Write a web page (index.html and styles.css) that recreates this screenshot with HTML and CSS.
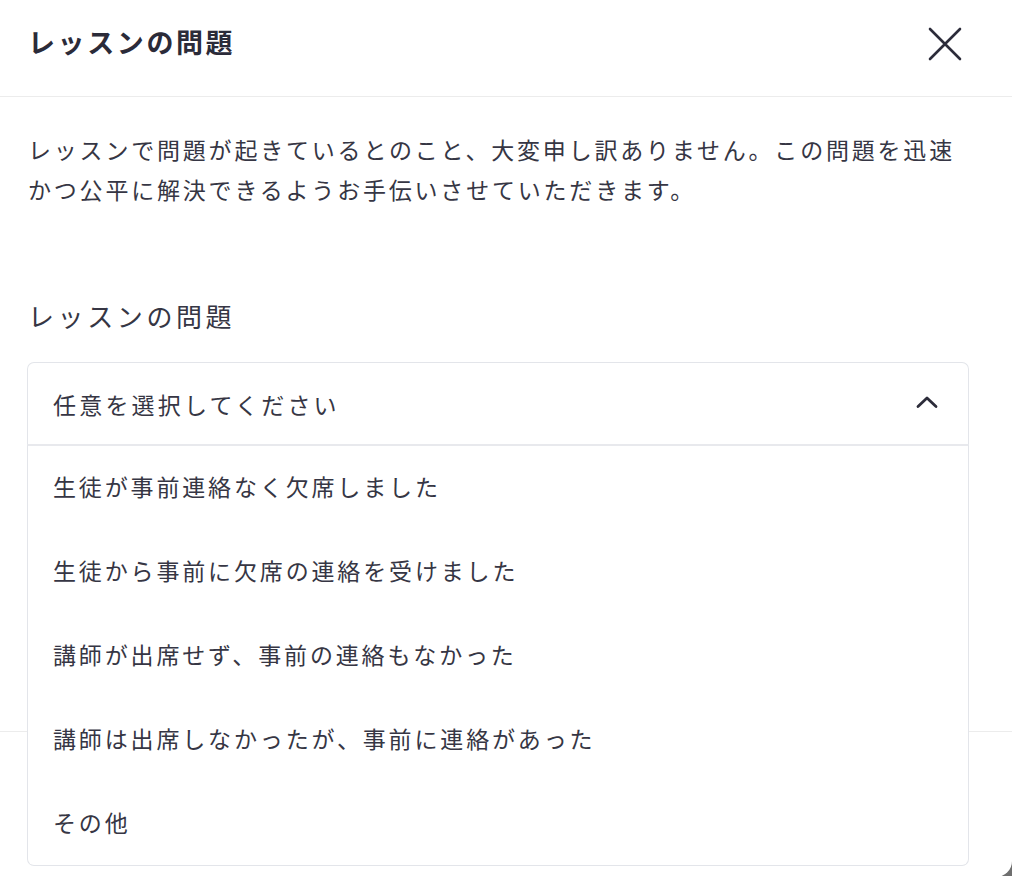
FILE: index.html
```html
<!DOCTYPE html>
<html lang="ja">
<head>
<meta charset="utf-8">
<title>レッスンの問題</title>
<link rel="stylesheet" href="styles.css">
</head>
<body>
<div class="modal">
  <header class="modal-header">
    <h1 class="title">レッスンの問題</h1>
    <button class="close" aria-label="閉じる">
      <svg width="34" height="34" viewBox="0 0 34 34" fill="none" stroke="#2c2c3a" stroke-width="2.6" stroke-linecap="round"><path d="M2 2L32 32M32 2L2 32"/></svg>
    </button>
  </header>
  <div class="modal-body">
    <p class="intro">レッスンで問題が起きているとのこと、大変申し訳ありません。この問題を迅速かつ公平に解決できるようお手伝いさせていただきます。</p>
    <label class="field-label">レッスンの問題</label>
    <div class="combo">
      <div class="select">
        <span class="placeholder">任意を選択してください</span>
        <svg class="chevron" width="22" height="14" viewBox="0 0 22 14" fill="none" stroke="#2c2c3a" stroke-width="2.8" stroke-linecap="round" stroke-linejoin="round"><path d="M2 11.5L11 3L20 11.5"/></svg>
      </div>
      <ul class="menu">
        <li class="option">生徒が事前連絡なく欠席しました</li>
        <li class="option">生徒から事前に欠席の連絡を受けました</li>
        <li class="option">講師が出席せず、事前の連絡もなかった</li>
        <li class="option">講師は出席しなかったが、事前に連絡があった</li>
        <li class="option">その他</li>
      </ul>
    </div>
  </div>
  <footer class="modal-footer"></footer>
</div>
</body>
</html>
```

FILE: styles.css
```css
html, body {
  margin: 0;
  padding: 0;
  height: 100%;
  overflow: hidden;
}
body {
  background: #6f6f6f;
  font-family: "Noto Sans CJK JP", "Noto Sans", sans-serif;
  color: #2e2e3c;
}
.modal {
  background: #fff;
  height: 877px;
  border-bottom-right-radius: 16px;
  display: flex;
  flex-direction: column;
}
.modal-header {
  box-sizing: border-box;
  height: 97px;
  border-bottom: 1px solid #ececec;
  display: flex;
  align-items: center;
  justify-content: space-between;
  padding: 0 48px 14px 28px;
}
.title {
  margin: 0;
  font-size: 27px;
  font-weight: 700;
  letter-spacing: 2.6px;
  color: #2b2b39;
}
.close {
  border: 0;
  background: none;
  padding: 0;
  display: flex;
  margin-top: 6px;
  margin-right: 2px;
}
.modal-body {
  flex: 1;
  padding: 32px 43px 0 28px;
  position: relative;
}
.intro {
  margin: 0;
  font-size: 23px;
  line-height: 40px;
  letter-spacing: 2.8px;
  color: #363644;
}
.field-label {
  display: block;
  margin-top: 87px;
  font-size: 26px;
  line-height: 40px;
  letter-spacing: 3.6px;
  color: #363644;
}
.combo {
  position: relative;
  margin-top: 26px;
  margin-left: -1px;
}
.select {
  height: 81px;
  border: 1px solid #e3e5ea;
  border-bottom: 0;
  border-radius: 7px 7px 0 0;
  display: flex;
  align-items: center;
  justify-content: space-between;
  padding: 0 30px 0 25px;
}
.placeholder {
  font-size: 23px;
  letter-spacing: 3.2px;
  color: #363644;
}
.option {
  font-size: 23px;
  letter-spacing: 2.85px;
  color: #363644;
}
.chevron {
  display: block;
  margin-top: -4px;
}
.menu {
  position: absolute;
  left: 0;
  right: 0;
  top: 100%;
  margin: 0;
  padding: 0;
  list-style: none;
  background: #fff;
  border: 1px solid #e3e5ea;
  border-top: 2px solid #e8e9ed;
  border-radius: 0 0 7px 7px;
  z-index: 2;
}
.option {
  box-sizing: border-box;
  height: 83.8px;
  display: flex;
  align-items: center;
  padding: 0 25px 3px;
}
.modal-footer {
  height: 145px;
  border-top: 1px solid #ececec;
}
```
